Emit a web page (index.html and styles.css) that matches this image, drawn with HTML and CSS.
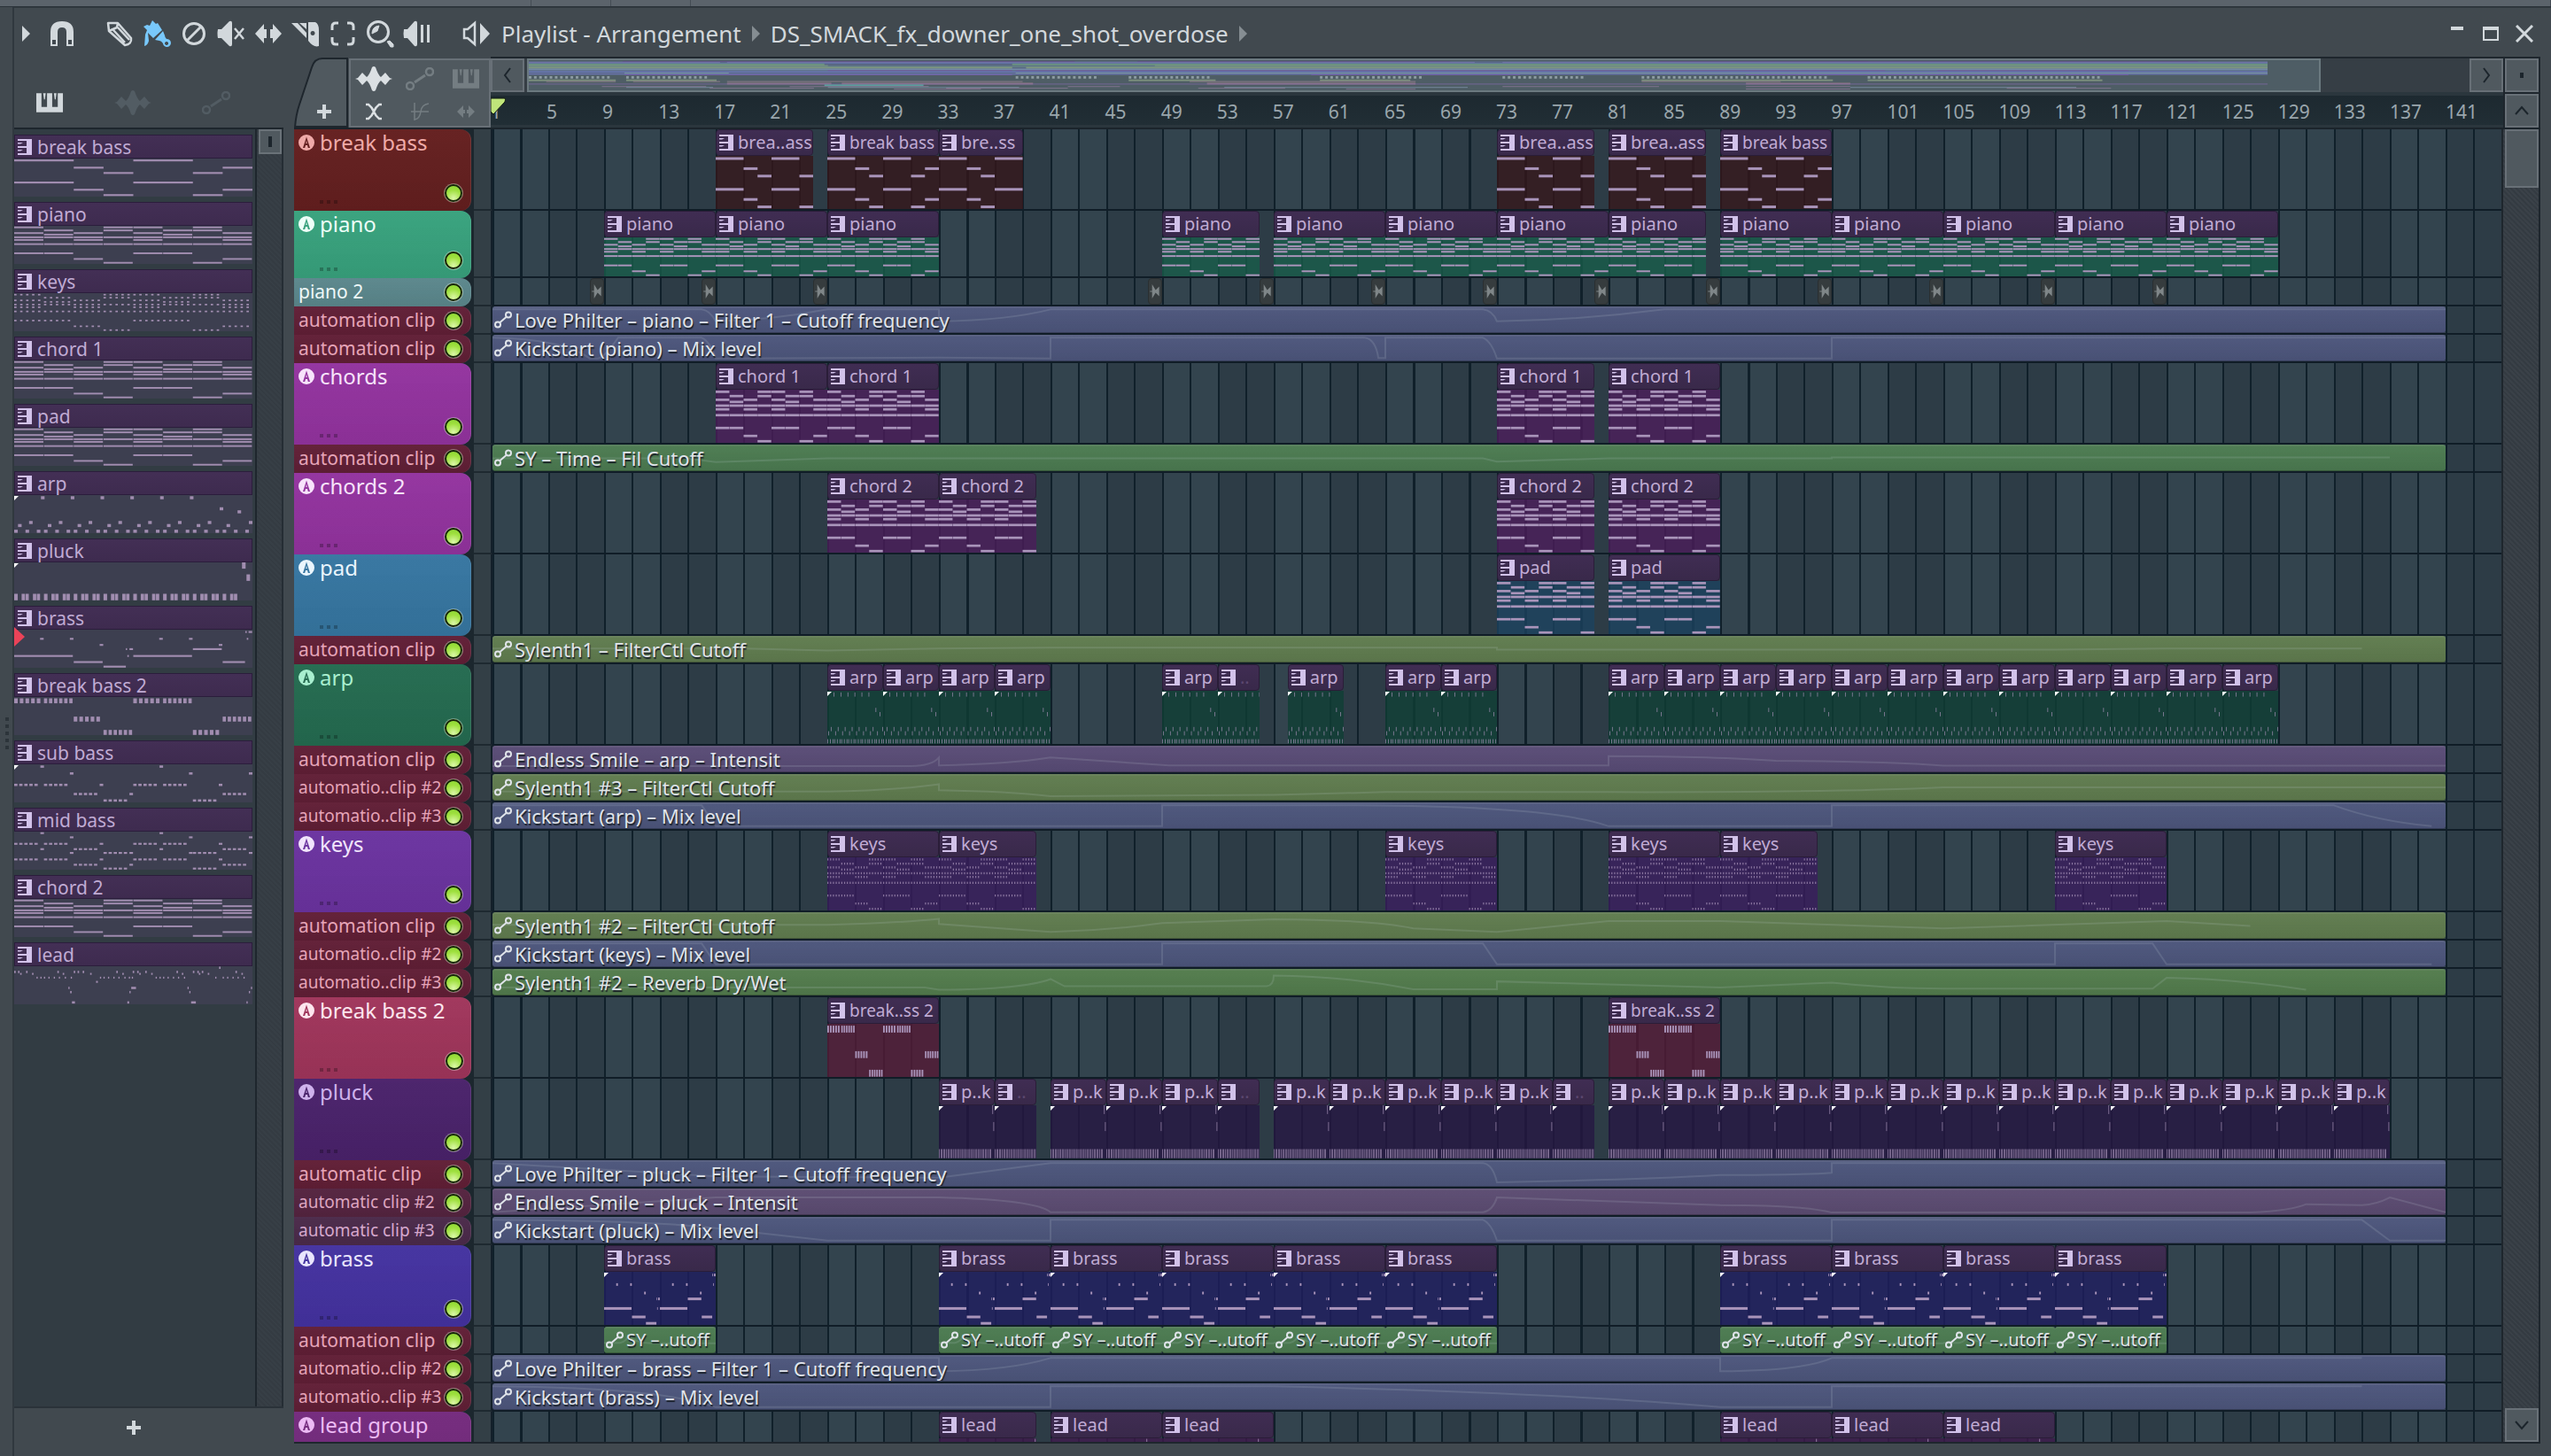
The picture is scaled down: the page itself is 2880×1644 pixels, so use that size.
FILE: index.html
```html
<!DOCTYPE html>
<html lang="en">
<head>
    <meta charset="UTF-8">
    <meta name="viewport" content="width=device-width, initial-scale=1.0">
    <title>Playlist - Arrangement</title>
    <link rel="stylesheet" href="styles.css">
</head>
<body>
    <svg class="defs" aria-hidden="true">
        <symbol id="i-keys" viewBox="0 0 32 22"><path d="M0 0H6V16H12.500V0H18.500V16H25V0H31V22H0Z"/><path d="M8 0H11L10 7H9ZM20.500 0H23.500L22.500 7H21.500Z"/></symbol>
        <symbol id="i-wave" viewBox="0 0 42 28"><path d="M0 14L3 13L8 7L13 12Q16 10 19 1Q21-1 23 1Q26 10 29 12L34 7L39 13L42 14L39 15L34 21L29 16Q26 18 23 27Q21 29 19 27Q16 18 13 16L8 21L3 15Z"/></symbol>
        <symbol id="i-auto" viewBox="0 0 32 26"><g fill="none" stroke="currentColor" stroke-width="2.500"><circle cx="5" cy="21" r="4"/><circle cx="27" cy="5" r="4"/><path d="M10 17L22 9" stroke-width="3"/></g></symbol>
        <symbol id="i-pattern" viewBox="0 0 16 18"><path d="M0 0H16V18H0V16H10V10H0V8H10V2H0Z"/><path d="M0 4H6L3 5.500H0ZM0 12H6L3 13.500H0Z"/></symbol>
        <symbol id="i-link" viewBox="0 0 20 20"><g fill="none" stroke="currentColor" stroke-width="2"><circle cx="4" cy="15.500" r="3"/><circle cx="16" cy="4.500" r="3"/><path d="M6.500 13L13.500 7"/></g></symbol>
        <symbol id="i-inst" viewBox="0 0 18 18"><path fill-rule="evenodd" d="M9 0A9 9 0 1 1 9 18A9 9 0 1 1 9 0ZM9 2.500L5 15H7.200L8 12H10L10.800 15H13ZM9 6.500L9.700 10H8.300Z"/></symbol>
        <symbol id="i-audio" viewBox="0 0 14 20"><path d="M0 9.500H3V0L8 8L13 3V17L8 12L3 20V10.500H0Z"/></symbol>
    </svg>

    <div class="topstrip"><span></span><span></span><span></span><span></span></div>

    <main class="window">
        <header class="titlebar">
            <button class="caret" aria-label="Menu"><svg viewBox="0 0 9 18"><path d="M0 0L9 9L0 18Z"/></svg></button>
            <button class="tool snap" aria-label="Snap"><svg viewBox="0 0 32 32"><path fill-rule="evenodd" d="M3 30V14Q3 2 16 2T29 14V30H21V14Q21 9 16 9T11 14V30ZM5 23V28H9V23ZM23 23V28H27V23Z"/></svg></button>
            <nav class="tools">
                <button class="tool" aria-label="Draw"><svg viewBox="0 0 32 32"><g fill="none" stroke="currentColor" stroke-width="2.500" stroke-linejoin="round"><path d="M3 4L14 4L29 21Q30 28 22 29L4 13ZM14 4L13 9L4 13M9 12L22 26M14 9L27 23"/></g></svg></button>
                <button class="tool on" aria-label="Paint"><svg viewBox="0 0 32 32"><path fill-rule="evenodd" d="M1 8L5 6L8 7L11 1L15 5L17 4L22 12L12 21L6 15L7 24Q6 29 2 30L3 17L5 12Z"/><path fill-rule="evenodd" d="M23 13L25 18Q25 20 27 22A4.500 4.500 0 1 1 23 27Q21 24 19 24L14 23ZM27 25A2 2 0 1 0 27.100 25Z"/></svg></button>
                <button class="tool" aria-label="Delete"><svg viewBox="0 0 32 32"><g fill="none" stroke="currentColor" stroke-width="3"><circle cx="16" cy="16" r="11.500"/><path d="M8 24L24 8"/></g></svg></button>
                <button class="tool" aria-label="Mute"><svg viewBox="0 0 32 32"><path d="M1 11H5L14 2Q17 1 17 4V28Q17 31 14 30L5 21H1Q0 16 1 11Z"/><path d="M20 10L30 22M30 10L20 22" stroke="currentColor" stroke-width="2.500"/></svg></button>
                <button class="tool" aria-label="Slip"><svg viewBox="0 0 32 32"><path d="M1 16L11 5V11H14V21H11V27ZM31 16L21 5V11H18V21H21V27Z"/></svg></button>
                <button class="tool" aria-label="Slice"><svg viewBox="0 0 32 32"><path fill-rule="evenodd" d="M0 4H7L17 15V21ZM9 4L17 11V4ZM19 3H27Q31 5 31 12V30Q25 32 19 24ZM24 13A2.500 2.500 0 1 0 24.100 13Z"/></svg></button>
                <button class="tool" aria-label="Select"><svg viewBox="0 0 32 32"><path d="M4 12V8Q4 4 8 4H11M21 4H24Q28 4 28 8V12M28 20V24Q28 28 24 28H21M11 28H8Q4 28 4 24V20" fill="none" stroke="currentColor" stroke-width="3"/></svg></button>
                <button class="tool" aria-label="Zoom"><svg viewBox="0 0 32 32"><circle cx="14" cy="14" r="11.500" fill="none" stroke="currentColor" stroke-width="3"/><path d="M7 16Q7 8 15 7L13 13ZM24 25L27 24L31 28V31L28 31Z" stroke="currentColor" stroke-width="1"/></svg></button>
                <button class="tool" aria-label="Playback"><svg viewBox="0 0 32 32"><path d="M1 11H5L13 2Q16 1 16 4V28Q16 31 13 30L5 21H1Q0 16 1 11ZM20 6H23V26H20ZM27 6H30V26H27Z"/></svg></button>
            </nav>
            <button class="tool out" aria-label="Preview"><svg viewBox="0 0 32 32"><path d="M14 4V28L6 21H2V11H6Z" fill="none" stroke="currentColor" stroke-width="2.500"/><path d="M20 4L31 16L20 28Z"/></svg></button>
            <h1 class="title">Playlist - Arrangement</h1>
            <svg class="crumb" viewBox="0 0 9 18"><path d="M0 0L9 9L0 18Z"/></svg>
            <span class="title">DS_SMACK_fx_downer_one_shot_overdose</span>
            <svg class="crumb" viewBox="0 0 9 18"><path d="M0 0L9 9L0 18Z"/></svg>
            <div class="win-buttons">
                <button aria-label="Minimize"><svg viewBox="0 0 20 20"><path d="M3 2H17V6H3Z"/></svg></button>
                <button aria-label="Maximize"><svg viewBox="0 0 20 20"><path fill-rule="evenodd" d="M1 2H19V18H1ZM3 6V16H17V6Z"/></svg></button>
                <button aria-label="Close"><svg viewBox="0 0 20 20"><path d="M1 1L19 19M19 1L1 19" stroke="currentColor" stroke-width="3"/></svg></button>
            </div>
        </header>

        <div class="workspace">
            <aside class="picker">
                <div class="picker-tabs">
                    <button class="active" aria-label="Patterns"><svg class="ic-keys"><use href="#i-keys"/></svg></button>
                    <button aria-label="Audio clips"><svg class="ic-wave"><use href="#i-wave"/></svg></button>
                    <button aria-label="Automation clips"><svg class="ic-auto"><use href="#i-auto"/></svg></button>
                </div>
                <div class="picker-body">
                    <div class="picker-list" id="picker"></div>
                    <div class="picker-scroll"><button class="thumb" aria-label="Scroll patterns"></button></div>
                </div>
                <button class="picker-add" aria-label="Add pattern"><svg viewBox="0 0 16 16"><path d="M6 0H10V6H16V10H10V16H6V10H0V6H6Z"/></svg></button>
            </aside>

            <section class="playlist">
                <div class="head">
                    <div class="corner">
                        <button class="add-tab" aria-label="Add track">
                            <svg class="tab-shape" viewBox="0 0 62 80" preserveAspectRatio="none"><path d="M1 80Q2 66 6 54L20 12Q23 2 32 2H60V79H2Z"/></svg>
                            <svg class="plus" viewBox="0 0 16 16"><path d="M6 0H10V6H16V10H10V16H6V10H0V6H6Z"/></svg>
                        </button>
                        <div class="modes">
                            <button class="active" aria-label="Audio"><svg class="ic-wave"><use href="#i-wave"/></svg></button>
                            <button aria-label="Automation"><svg class="ic-auto"><use href="#i-auto"/></svg></button>
                            <button aria-label="Pattern"><svg class="ic-keys"><use href="#i-keys"/></svg></button>
                            <button class="active" aria-label="Crossfade"><svg class="ic-sq" viewBox="0 0 20 20"><path d="M1 2H4Q8 5 10 10T16 18H19M19 2H16Q12 5 10 10T4 18H1" fill="none" stroke="currentColor" stroke-width="2.500"/></svg></button>
                            <button aria-label="Curve"><svg class="ic-sq" viewBox="0 0 20 20"><path d="M0 10H20M4 0V20M4 19Q10 18 11 10T20 1" fill="none" stroke="currentColor" stroke-width="1.500"/></svg></button>
                            <button aria-label="Stretch"><svg class="ic-sq" viewBox="0 0 20 20"><path d="M0 10L7 3V8H9V12H7V17ZM20 10L13 3V8H11V12H13V17Z"/></svg></button>
                        </div>
                    </div>
                    <div class="timeline">
                        <div class="minimap">
                            <button aria-label="Scroll left"><svg viewBox="0 0 20 20"><path d="M13 2L7 10L13 18"/></svg></button>
                            <div class="map-track"><div class="map-thumb"><svg id="map" viewBox="0 0 1000 36" preserveAspectRatio="none"></svg></div></div>
                            <button aria-label="Scroll right"><svg viewBox="0 0 20 20"><path d="M7 2L13 10L7 18"/></svg></button>
                        </div>
                        <div class="ruler" id="ruler">
                            <svg class="playhead" viewBox="0 0 18 20"><path d="M0 1H16Q17 2 16 5L3 19L0 16Z"/></svg>
                        </div>
                    </div>
                    <div class="v-head">
                        <button aria-label="Focus"><i></i></button>
                        <button aria-label="Scroll up"><svg viewBox="0 0 20 20"><path d="M3 14L10 6L17 14"/></svg></button>
                    </div>
                </div>
                <div class="body">
                    <div class="tracks" id="tracks"></div>
                    <div class="v-scroll">
                        <button class="v-thumb" aria-label="Scroll tracks"></button>
                        <button class="v-down" aria-label="Scroll down"><svg viewBox="0 0 20 20"><path d="M3 6L10 14L17 6"/></svg></button>
                    </div>
                </div>
            </section>
        </div>
    </main>
    <script src="script.js"></script>
</body>
</html>
```
FILE: styles.css
```css
* {
    box-sizing: border-box;
}

body {
    margin: 0;
    height: 100vh;
    display: flex;
    flex-direction: column;
    overflow: hidden;
    background-color: #41494f;
    font-family: "Noto Sans", "Open Sans", sans-serif;
    color: #d2d8dc;
}

button {
    margin: 0;
    padding: 0;
    border: 0;
    background: none;
    color: inherit;
    font: inherit;
    cursor: pointer;
}

svg {
    display: block;
    fill: currentColor;
}

.defs {
    position: absolute;
    width: 0;
    height: 0;
}

.topstrip {
    flex: none;
    display: grid;
    grid-template-columns: 20fr 3fr 3fr 70fr;
    height: 8px;
    background-color: #5b636b;
    border-bottom: 1px solid #2a3239;
}

.topstrip span {
    border-right: 1px solid #454d55;
}

.window {
    flex: 1;
    min-height: 0;
    display: flex;
    flex-direction: column;
    margin-left: 14px;
    padding: 0 12px 14px 0;
    border-left: 2px solid #30383f;
    border-top: 1px solid #31393f;
    position: relative;
}

/* grip on the left edge */
.window::before {
    content: "";
    position: absolute;
    left: -10px;
    top: 49%;
    width: 4px;
    height: 36px;
    background: repeating-linear-gradient(#2c343a 0 4px, transparent 4px 8px);
}

/* title bar */
.titlebar {
    flex: none;
    display: flex;
    align-items: center;
    height: 58px;
    margin-bottom: -3px;
    padding: 0 8px 0 9px;
}

.caret svg,
.crumb {
    width: 9px;
    height: 18px;
}

.tool svg {
    width: 32px;
    height: 32px;
}

.snap {
    margin-left: 20px;
}

.tools {
    display: flex;
    margin: 0 30px 0 28px;
}

.tools .tool {
    width: 42px;
    display: flex;
    justify-content: center;
}

.tool.on {
    color: #78c8fb;
}

.title {
    margin: 0 0 0 12px;
    font-size: 26px;
    font-weight: 400;
    line-height: 32px;
}

.crumb {
    margin-left: 12px;
    color: #858d92;
}

.win-buttons {
    display: flex;
    gap: 18px;
    margin-left: auto;
}

.win-buttons svg {
    width: 20px;
    height: 20px;
}

.workspace {
    flex: 1;
    min-height: 0;
    display: flex;
    gap: 12px;
}

/* icons */
.ic-keys { width: 31px; height: 22px; }
.ic-wave { width: 42px; height: 28px; }
.ic-auto { width: 32px; height: 26px; }
.ic-sq { width: 20px; height: 20px; }

/* picker panel */
.picker {
    flex: none;
    width: 304px;
    display: flex;
    flex-direction: column;
}

.picker-tabs {
    display: flex;
    align-items: center;
    gap: 57px;
    height: 80px;
    padding: 24px 0 0 25px;
    color: #525c63;
}

.picker-tabs .active {
    color: #d2d8dc;
}

.picker-body {
    flex: 1;
    min-height: 0;
    display: flex;
    border-top: 2px solid #1e262d;
    border-bottom: 2px solid #2a3239;
    background-color: #323c43;
}

.picker-list {
    flex: 1;
    padding: 6px 3px 0 0;
    border-right: 2px solid #1e262d;
    overflow: hidden;
}

.pattern {
    position: relative;
    display: block;
    width: 100%;
    height: 70px;
    margin-bottom: 6px;
    text-align: left;
    background-color: #3d3f50;
}

.pattern.current::after {
    content: "";
    position: absolute;
    left: 0;
    top: 24px;
    width: 12px;
    height: 22px;
    background-color: #ea4358;
    clip-path: polygon(0 0, 100% 50%, 0 100%);
}

.pattern-name {
    display: flex;
    align-items: center;
    gap: 6px;
    height: 27px;
    padding-left: 3px;
    font-size: 21px;
    line-height: 22px;
    color: #c0abd4;
    background-image: linear-gradient(#432f55, #3e2b4f);
    border: 1px solid #2b1d3c;
}

.pattern-name svg {
    width: 16px;
    height: 18px;
    color: #d2c2ea;
}

.strip {
    position: relative;
    display: block;
}

.notes {
    width: 100%;
    height: 43px;
    color: #a18db0;
}

.picker-scroll {
    width: 30px;
    padding-left: 2px;
    background: repeating-linear-gradient(45deg, #373f46 0 2px, #343b42 2px 4px);
    border-right: 2px solid #252d34;
}

.thumb {
    display: block;
    width: 26px;
    height: 28px;
    border: 2px solid #6a7278;
    background: linear-gradient(#1c252c, #1c252c) center / 4px 12px no-repeat #50595f;
}

.picker-add {
    height: 40px;
    padding: 4px 34px 0 0;
    display: flex;
    align-items: center;
    justify-content: center;
}

.picker-add svg,
.plus {
    width: 16px;
    height: 16px;
}

/* playlist head */
.playlist {
    flex: 1;
    min-width: 0;
    display: flex;
    flex-direction: column;
}

.head {
    flex: none;
    display: flex;
    height: 82px;
    border-bottom: 2px solid #1b242b;
}

.corner {
    flex: none;
    display: flex;
    width: 222px;
}

.add-tab {
    position: relative;
    width: 62px;
    padding: 44px 0 0 26px;
}

.tab-shape {
    position: absolute;
    left: 0;
    top: 0;
    width: 62px;
    height: 80px;
    fill: #50595f;
    stroke: #1e262d;
    stroke-width: 2;
}

.plus {
    position: relative;
}

.modes {
    flex: 1;
    display: grid;
    grid-template-columns: 3fr 3fr 3fr;
    margin-top: 2px;
    border: 2px solid #687077;
    background-color: #50595f;
    color: #747d82;
}

.modes button {
    display: flex;
    align-items: center;
    justify-content: center;
}

.modes .active {
    color: #dbe0e3;
}

.timeline {
    flex: 1;
    min-width: 0;
}

.minimap {
    display: flex;
    height: 44px;
    border-top: 2px solid #1e262d;
    border-bottom: 4px solid #2b363d;
    background-color: #363e45;
}

.minimap button,
.v-head button,
.v-down {
    flex: none;
    display: flex;
    align-items: center;
    justify-content: center;
    width: 38px;
    height: 38px;
    border: 2px solid #687077;
    background-color: #50595f;
}

.minimap button svg,
.v-head svg,
.v-down svg {
    width: 20px;
    height: 20px;
    fill: none;
    stroke: #1c252c;
    stroke-width: 2;
}

.map-track {
    flex: 1;
    padding: 0 168px 0 3px;
}

.map-thumb {
    height: 38px;
    padding-right: 58px;
    border: 2px solid #6b797f;
    background-color: #4e5d65;
}

.map-thumb svg {
    width: 100%;
    height: 34px;
}

.ruler {
    position: relative;
    display: grid;
    grid-template-columns: repeat(36, 1fr);
    height: 36px;
    padding: 0 2px 0 0;
    background-image: linear-gradient(#1d2930, #212e35);
    border-bottom: 3px solid #2b363d;
    color: #9aa6ac;
    font-size: 21px;
    line-height: 36px;
}

.playhead {
    position: absolute;
    left: 0;
    top: 2px;
    width: 18px;
    height: 20px;
    fill: #c0e57a;
    stroke: #101a10;
}

.v-head {
    display: flex;
    flex-direction: column;
    gap: 2px;
    width: 42px;
    padding: 2px 0 0 2px;
    border-right: 2px solid #1e262d;
    background-color: #1e262d;
}

.v-head i {
    width: 4px;
    height: 6px;
    background-color: #1c252c;
}

/* tracks */
.body {
    flex: 1;
    min-height: 0;
    display: flex;
    border-bottom: 2px solid #1e262d;
}

.tracks {
    flex: 1;
    min-width: 0;
    overflow: hidden;
    background-color: #1c272e;
}

.track {
    --tint: #611f36;
    --ink: #e6a4b8;
    --body: #361a1f;
    display: grid;
    grid-template-columns: 200px 24px 1fr;
    height: 32px;
}

.track.tall { height: 92px; }
.track.mid { height: 76px; }

.break-bass { --tint: #641f1f; --ink: #efaaa8; --body: #35161a; }
.piano { --tint: #38a27d; --ink: #edfff8; --body: #185c4a; }
.piano-2 { --tint: #5b878c; --ink: #eef8f8; }
.chords { --tint: #93339f; --ink: #f7e3fb; --body: #4b1d5a; }
.pad { --tint: #3676a1; --ink: #eaf5fd; --body: #1b425f; }
.arp { --tint: #246b50; --ink: #a8efcf; --body: #0f3e34; }
.keys { --tint: #6b33a0; --ink: #f1e4fc; --body: #3a1d5e; }
.break-bass-2 { --tint: #a0355b; --ink: #fde6ee; --body: #551c37; }
.pluck { --tint: #4a226b; --ink: #cfb2ec; --body: #261642; }
.brass { --tint: #4432a0; --ink: #e9e5fd; --body: #1f1e60; }
.lead { --tint: #742a7d; --ink: #ecbaf4; --body: #3f1a4c; }
.auto-b { --tint: #552440; --ink: #dda5c0; }
.auto-c { --tint: #4b2a4a; --ink: #d6a8cd; }

.track-head {
    position: relative;
    display: flex;
    align-items: center;
    justify-content: space-between;
    padding: 0 8px 0 5px;
    border-radius: 0 12px 12px 0;
    background-color: var(--tint);
    background-image: linear-gradient(rgba(255, 255, 255, 0.02), rgba(0, 0, 0, 0.06));
    border-right: 1px solid rgba(255, 255, 255, 0.1);
    color: var(--ink);
    font-size: 21px;
    line-height: 30px;
    white-space: nowrap;
}

.track-name {
    display: flex;
    align-items: center;
    gap: 6px;
    padding-bottom: 2px;
}

.track-name svg {
    width: 18px;
    height: 18px;
}

.track-name.tight {
    font-size: 19px;
}

.tall .track-head,
.mid .track-head {
    align-items: flex-start;
    font-size: 24px;
}

.tall .led,
.mid .led {
    align-self: flex-end;
    margin-bottom: 9px;
}

.dots {
    position: absolute;
    left: 29px;
    bottom: 8px;
    width: 20px;
    height: 4px;
    background: repeating-linear-gradient(90deg, rgba(0, 0, 0, 0.25) 0 4px, transparent 4px 8px);
}

.led {
    appearance: none;
    flex: none;
    width: 22px;
    height: 22px;
    margin: 0;
    border: 1px solid rgba(255, 255, 255, 0.35);
    border-radius: 50%;
    background-color: #16230a;
    background-clip: padding-box;
}

.led:checked {
    background-image: radial-gradient(circle at 50% 80%, #dcf8a8, #9fe03f 50%, #7fd02a);
    box-shadow: inset 0 0 0 2px #16230a;
}

.gutter {
    margin-left: 3px;
    border-right: 2px solid #14202a;
    border-bottom: 2px solid #1e2930;
    background-color: #333f46;
}

.lane {
    position: relative;
    border-bottom: 2px solid #101d27;
    background-image:
        repeating-linear-gradient(90deg, #10202a 0 2px, transparent 2px calc(100% / 72)),
        repeating-linear-gradient(90deg, #33444e 0 calc(100% / 36), #2d3c46 calc(100% / 36) calc(100% / 18));
}

/* clips sit on the lane by bar number */
.clip {
    position: absolute;
    top: 0;
    bottom: 0;
    display: flex;
    flex-direction: column;
    overflow: hidden;
}

.clip-name {
    flex: none;
    display: flex;
    align-items: center;
    gap: 5px;
    height: 30px;
    padding-left: 3px;
    border: 1px solid #2a1d38;
    border-radius: 4px;
    background-image: linear-gradient(#402d53, #39294a);
    color: #c0abd4;
    font-size: 20px;
    line-height: 26px;
    white-space: nowrap;
}

.clip-name.tight {
    font-size: 19px;
}

.clip-name.faint {
    color: #5b4870;
}

.clip-name svg {
    flex: none;
    width: 16px;
    height: 18px;
    color: #d2c2ea;
}

.clip-notes {
    position: relative;
    flex: 1;
    min-height: 0;
}

.clip-notes::before {
    content: "";
    position: absolute;
    inset: 0;
    background-color: var(--body);
    opacity: 0.8;
}

.clip-notes svg {
    position: relative;
    width: 100%;
    height: 100%;
    color: #a994ba;
}

.arp .clip-notes svg,
.keys .clip-notes svg,
.pluck .clip-notes svg {
    opacity: 0.7;
}

.trimmed::after {
    content: "";
    position: absolute;
    left: 0;
    top: 1px;
    width: 5px;
    height: 5px;
    background-color: #fff;
    clip-path: polygon(0 0, 100% 0, 0 100%);
}

.clip.audio {
    border: 1px solid #2a2f31;
    border-radius: 4px;
    background-color: #363c3e;
    color: #7f8688;
    justify-content: center;
}

.clip.audio svg {
    width: 100%;
    height: 16px;
}

.clip.auto {
    --auto: #4d567c;
    justify-content: center;
    border-radius: 3px;
    border-top: 2px solid rgba(255, 255, 255, 0.1);
    border-bottom: 1px solid rgba(0, 0, 0, 0.3);
    background-color: var(--auto);
    background-image: linear-gradient(rgba(255, 255, 255, 0.02), rgba(0, 0, 0, 0.06));
    color: #e0e4ea;
}

.clip.green { --auto: #4c7b51; }
.clip.olive { --auto: #607c4f; }
.clip.moss { --auto: #537c4d; }
.clip.violet { --auto: #594c76; }
.clip.plum { --auto: #5c4c72; }

.curve {
    position: absolute;
    inset: 0;
    width: 100%;
    height: 100%;
    fill: none;
    stroke: rgba(200, 215, 220, 0.15);
    stroke-width: 2;
}

.auto-name {
    position: relative;
    display: flex;
    align-items: center;
    gap: 3px;
    padding: 0 0 2px 2px;
    font-size: 22px;
    line-height: 24px;
    text-shadow: 1px 2px 1px #1a2028;
    white-space: nowrap;
}

.auto-name.short {
    font-size: 20px;
}

.auto-name svg {
    flex: none;
    width: 20px;
    height: 20px;
}

/* vertical scrollbar */
.v-scroll {
    flex: none;
    display: flex;
    flex-direction: column;
    justify-content: space-between;
    width: 44px;
    padding-left: 2px;
    border-left: 2px solid #1e262d;
    border-right: 2px solid #1e262d;
    background: repeating-linear-gradient(45deg, #3a4148 0 2px, #343b42 2px 4px);
}

.v-thumb {
    height: 66px;
    border: 2px solid #687077;
    background-color: #50595f;
}
```
FILE: script.js
```js
const BARS = 144;
const END = 140;

// note patterns: 8 columns wide, rows as [y %, height %, [x, width] ...]
const cols = (list, w = 1) => list.map(c => [c, w]);
const dashes = (list, n, step, w) => list.flatMap(c => Array.from({ length: n }, (_, i) => [c + i * step, w]));
const every = [0, 1, 2, 3, 4, 5, 6, 7];

const chord = [
    [4, [0, 3, 4, 6]], [12, [1, 3, 5, 6]], [19, [0, 2, 4, 7]], [23, [1, 5]], [30, every],
    [37, [0, 2, 4, 7]], [48, every], [72, [0, 1, 4, 5]], [87, [2, 7]], [97, [3, 6]]
];

const patterns = {
    'break bass': [5, 63].flatMap(y => [
        [y, 5, [[0, 2], [4, 2]]],
        [y + 19, 5, [[2, 1], [7, 1]]],
        [y + 33, 5, [[3, 1], [6, 1]]]
    ]),
    chord: chord.map(([y, c]) => [y, 4.5, cols(c, 0.98)]),
    keys: chord.map(([y, c]) => [y, 4, dashes(c, 5, 0.2, 0.08)]),
    arp: [
        [7, 8, cols([0.9, 1.9, 2.9, 3.9, 4.9, 5.9], 0.12)],
        [36, 8, [[6.9, 0.12]]],
        [44, 8, [[7.5, 0.12]]],
        [72, 8, cols([0.5, 1.5, 2.5, 3.5, 4.5, 5.5, 6.5, 7.88], 0.12)],
        [80, 8, cols([0.13, 1.13, 2.13, 3.13, 4.13, 5.13, 6.13, 7.13], 0.12)],
        [95, 8, dashes(every, 3, 0.38, 0.12)]
    ],
    pluck: [
        [8, 17, [[7.65, 0.12]]],
        [40, 17, [[7.8, 0.12]]],
        [91, 17, every.flatMap(c => [[c, 0.12], [c + 0.25, 0.11], [c + 0.38, 0.11], [c + 0.63, 0.11], [c + 0.76, 0.11]]).slice(0, 38)]
    ],
    brass: [
        [6, 5, [[7.76, 0.05], [7.87, 0.12]]],
        [24, 5, [[0.87, 0.12], [1.87, 0.12], [4.87, 0.12], [5.87, 0.12], [7.81, 0.05]]],
        [40, 5, [[2.87, 0.12], [6.87, 0.12]]],
        [51, 5, [[3.75, 0.04], [3.87, 0.12], [6, 0.97]]],
        [69, 5, [[0, 1.97], [3.8, 0.05], [4, 1.97]]],
        [85, 5, [[2, 0.97], [7, 0.75]]],
        [97, 5, [[3, 0.75]]]
    ],
    'break bass 2': [
        [10, 13, [...dashes([0, 4], 5, 0.19, 0.12), ...dashes([1, 5], 6, 0.17, 0.11)]],
        [58, 13, [...dashes([2], 5, 0.19, 0.12), ...dashes([7], 6, 0.17, 0.11)]],
        [93, 13, [...dashes([3], 6, 0.17, 0.11), ...dashes([6], 5, 0.19, 0.12)]]
    ],
    'sub bass': [
        [6, 6, cols([0.88, 4.88], 0.12)],
        [24, 6, cols([1.87, 5.87, 7.88], 0.12)],
        [54, 6, [...dashes([0, 1, 4, 5], 5, 0.17, 0.11), [2.87, 0.12], [6.87, 0.12]]],
        [78, 6, [...dashes([2, 7], 5, 0.17, 0.11), [3.87, 0.12]]],
        [95, 6, dashes([3, 6], 5, 0.17, 0.11)]
    ],
    'mid bass': [
        [4, 5, cols([0.88, 4.88], 0.12)],
        [15, 5, cols([1.87, 5.87, 7.88], 0.12)],
        [32, 5, [...dashes([0, 1, 4, 5], 5, 0.17, 0.11), [2.87, 0.12], [6.87, 0.12]]],
        [46, 5, [...dashes([2, 7], 5, 0.17, 0.11), [0.88, 0.12], [4.88, 0.12]]],
        [56, 5, [...dashes([3, 6], 5, 0.17, 0.11), [1.87, 0.12], [5.87, 0.12], [7.88, 0.12], [3.87, 0.12]]],
        [73, 5, [...dashes([0, 1, 4, 5], 5, 0.17, 0.11), [2.87, 0.12], [6.87, 0.12]]],
        [87, 5, [...dashes([2, 7], 5, 0.17, 0.11), [3.87, 0.12]]],
        [97, 5, dashes([3, 6], 5, 0.17, 0.11)]
    ],
    lead: [
        [4, 6, [[6.88, 0.05]]],
        [15, 6, [0, 0.13, 0.4, 1.45, 2, 2.13, 2.3, 3.43, 3.98, 4.13, 4.4, 5.45, 6, 6.15, 6.3, 7.43].map(x => [x, 0.05])],
        [20, 5, [0.2, 0.6, 1.63, 2.55, 3.63, 4.2, 4.6, 5.63, 6.2, 6.5, 7.63].map(x => [x, 0.05])],
        [30, 5, [0.75, 0.88, 1, 1.15, 1.33, 1.5, 1.7, 1.9, 2.88, 3, 3.15, 3.33, 3.5, 3.7, 3.85, 3.95, 4.75, 4.88, 5, 5.15, 5.33, 5.5, 5.7, 6.75, 7, 7.15, 7.33, 7.5, 7.7].map(x => [x, 0.04])],
        [41, 5, [[2.75, 0.06]]],
        [57, 6, [[1.82, 0.04], [3.93, 0.16], [5.82, 0.04], [7.95, 0.04]]],
        [68, 6, [[1.88, 0.05], [3.87, 0.04], [5.88, 0.04], [7.88, 0.04]]],
        [95, 6, [[1.94, 0.1], [3.8, 0.06], [5.94, 0.16], [7.8, 0.04]]]
    ]
};
patterns.piano = patterns['chord 1'] = patterns['chord 2'] = patterns.pad = patterns.chord;

function notes(name, width, cls) {
    const rects = patterns[name].flatMap(([y, h, list]) =>
        list.map(([x, w]) => `<rect x="${x}" y="${y - h / 2}" width="${w}" height="${h}"/>`)).join('');
    return `<svg class="${cls || ''}" viewBox="0 0 ${width} 100" preserveAspectRatio="none">${rects}</svg>`;
}

const use = id => `<svg><use href="#${id}"/></svg>`;

// picker
const trimmedPatterns = ['arp', 'pluck', 'sub bass'];
document.getElementById('picker').innerHTML = ['break bass', 'piano', 'keys', 'chord 1', 'pad', 'arp', 'pluck', 'brass',
    'break bass 2', 'sub bass', 'mid bass', 'chord 2', 'lead'].map(name =>
    `<button class="pattern${name === 'brass' ? ' current' : ''}">
        <span class="pattern-name">${use('i-pattern')}${name}</span>
        <span class="strip${trimmedPatterns.includes(name) ? ' trimmed' : ''}">${notes(name, 8, 'notes')}</span>
    </button>`).join('');

// ruler
document.getElementById('ruler').insertAdjacentHTML('beforeend',
    Array.from({ length: 36 }, (_, i) => `<span>${i * 4 + 1}</span>`).join(''));

// clips: [start bar, length, label]
const run = (from, to, step, label) => {
    const out = [];
    for (let b = from; b < to; b += step) out.push([b, step, label]);
    return out;
};
const brassBars = [9, 33, 41, 49, 57, 65, 89, 97, 105, 113];

const tracks = [
    { name: 'break bass', cls: 'break-bass', size: 'tall', pattern: 'break bass', clips: [[17, 7, 'brea..ass'], [25, 8, 'break bass'], [33, 6, 'bre..ss'], [73, 7, 'brea..ass'], [81, 7, 'brea..ass'], [89, 8, 'break bass']] },
    { name: 'piano', cls: 'piano', size: 'mid', pattern: 'piano', clips: [...run(9, 33, 8, 'piano'), [49, 7, 'piano'], [57, 8, 'piano'], [65, 8, 'piano'], [73, 8, 'piano'], [81, 7, 'piano'], ...run(89, 129, 8, 'piano')] },
    { name: 'piano 2', cls: 'piano-2', audio: [8, 16, 24, 48, 56, 64, 72, 80, 88, 96, 104, 112, 120] },
    { name: 'automation clip', auto: 'Love Philter – piano – Filter 1 – Cutoff frequency', curve: 'M0 5H15Q15.6 10 16 55Q20 50 24 5H32V55Q37 50 40 5H71Q71.7 10 72 55Q78 50 84 5H96V5H140' },
    { name: 'automation clip', auto: 'Kickstart (piano) – Mix level', curve: 'M0 5Q5 10 7 92H7.5Q8 90 9 5H15Q15.6 20 16 92L32 88L40 92V5H62.5Q63.3 10 63.500 90H64V5H71Q71.6 20 72 92H96V5H140' },
    { name: 'chords', cls: 'chords', size: 'tall', pattern: 'chord 1', clips: [[17, 8, 'chord 1'], [25, 8, 'chord 1'], [73, 7, 'chord 1'], [81, 8, 'chord 1']] },
    { name: 'automation clip', auto: 'SY – Time – Fil Cutoff', color: 'green', curve: 'M0 50H14L16 66L24 50H71L72 64L80 50H96V46H136' },
    { name: 'chords 2', cls: 'chords', size: 'tall', pattern: 'chord 2', clips: [[25, 8, 'chord 2'], [33, 7, 'chord 2'], [73, 7, 'chord 2'], [81, 8, 'chord 2']] },
    { name: 'pad', cls: 'pad', size: 'tall', pattern: 'pad', clips: [[73, 7, 'pad'], [81, 8, 'pad']] },
    { name: 'automation clip', auto: 'Sylenth1 – FilterCtl Cutoff', color: 'olive', curve: 'M0 45H18L24 54L32 45L40 42H72V50H112L120 45H134' },
    { name: 'arp', cls: 'arp', size: 'tall', pattern: 'arp', trimmed: true, scale: 2, clips: [...run(25, 41, 4, 'arp'), [49, 4, 'arp'], [53, 3, '..'], [58, 4, 'arp'], ...run(65, 73, 4, 'arp'), ...run(81, 129, 4, 'arp')] },
    { name: 'automation clip', auto: 'Endless Smile – arp – Intensit', color: 'violet', curve: 'M0 78H30Q31.500 76 32 42V75Q37 70 40 42L48.500 75H80V36Q88 38 92 56Q100 58 104 76H140' },
    { name: 'automatio..clip #2', auto: 'Sylenth1 #3 – FilterCtl Cutoff', color: 'olive', curve: 'M0 66H24Q29 60 32 35V60Q37 65 40 85L56 80L64 68H80Q96 70 104 48H140' },
    { name: 'automatio..clip #3', auto: 'Kickstart (arp) – Mix level', curve: 'M0 5H15L16 92H48V5H62Q76 8 80 92H96V5H104V5H132Q135 70 139 92' },
    { name: 'keys', cls: 'keys', size: 'tall', pattern: 'keys', clips: [[25, 8, 'keys'], [33, 7, 'keys'], [65, 8, 'keys'], [81, 8, 'keys'], [89, 7, 'keys'], [113, 8, 'keys']] },
    { name: 'automation clip', auto: 'Sylenth1 #2 – FilterCtl Cutoff', color: 'olive', curve: 'M0 45H24Q29 38 32 20V42L40 75Q44 70 48 38L56 22Q63 24 66 60L72 75L80 30H88L104 60L120 30L126 50' },
    { name: 'automatio..clip #2', auto: 'Kickstart (keys) – Mix level', curve: 'M0 5H15L16 92H48V5H71L72 92H80V92H96L112 92V5H119L120 92H139' },
    { name: 'automatio..clip #3', auto: 'Sylenth1 #2 – Reverb Dry/Wet', color: 'moss', curve: 'M0 70H31L32 80Q38 78 40 35L41 65H55.500Q56 60 56 20Q61 22 66 78H72V45L88 70L96 50Q100 75 104 75H119L120 30Q125 35 130 80' },
    { name: 'break bass 2', cls: 'break-bass-2', size: 'tall', pattern: 'break bass 2', clips: [[25, 8, 'break..ss 2'], [81, 8, 'break..ss 2']] },
    { name: 'pluck', cls: 'pluck', size: 'tall', pattern: 'pluck', trimmed: true, scale: 2, clips: [[33, 4, 'p..k'], [37, 3, '..'], [41, 4, 'p..k'], [45, 4, 'p..k'], [49, 4, 'p..k'], [53, 3, '..'], ...run(57, 77, 4, 'p..k'), [77, 3, '..'], ...run(81, 137, 4, 'p..k')] },
    { name: 'automatic clip', auto: 'Love Philter – pluck – Filter 1 – Cutoff frequency', curve: 'M0 5L16 60L32 66L40 5H71Q71.7 10 72 85Q82 75 88 55Q94 54 96 45V5H140' },
    { name: 'automatic clip #2', cls: 'auto-b', auto: 'Endless Smile – pluck – Intensit', color: 'plum', curve: 'M0 92Q8 60 16 30H32Q39 40 40 92H71Q71.7 85 72 30L88 62Q94 62 96 93H126Q129 85 130 58L134 62Q135 60 136 30L140 92' },
    { name: 'automatic clip #3', cls: 'auto-c', auto: 'Kickstart (pluck) – Mix level', curve: 'M0 5Q12 10 16 40L24 92H40V5H71Q71.6 20 72 92H96V5H134L136 92H140' },
    { name: 'brass', cls: 'brass', size: 'tall', pattern: 'brass', trimmed: true, clips: brassBars.map(b => [b, 8, 'brass']) },
    { name: 'automation clip', shortAuto: brassBars, auto: 'SY –..utoff', color: 'green', curve: 'M0 60H20Q28 55 30 30Q40 62 60 62H140' },
    { name: 'automatio..clip #2', auto: 'Love Philter – brass – Filter 1 – Cutoff frequency', curve: 'M0 5H32V60Q37 58 40 5H88V60Q94 58 96 5H134' },
    { name: 'automatio..clip #3', auto: 'Kickstart (brass) – Mix level', curve: 'M0 5Q12 10 16 92H40V5H56Q76 30 88 92H96V5H134' },
    { name: 'lead group', cls: 'lead', size: 'tall', pattern: 'lead', clips: [[33, 7, 'lead'], [41, 8, 'lead'], [49, 8, 'lead'], [89, 8, 'lead'], [97, 8, 'lead'], [105, 8, 'lead']] }
];

const place = (start, len) => `left:${(start - 1) / BARS * 100}%;width:${len / BARS * 100}%`;

function autoClip(t, start, len) {
    return `<div class="clip auto ${t.color || ''}" style="${place(start, len)}">
        <svg class="curve" viewBox="0 0 ${END} 100" preserveAspectRatio="none"><path vector-effect="non-scaling-stroke" d="${t.curve}"/></svg>
        <span class="auto-name${t.shortAuto ? ' short' : ''}">${use('i-link')}${t.auto}</span>
    </div>`;
}

function clipName(label) {
    const cls = label.length > 9 ? ' tight' : label === '..' ? ' faint' : '';
    return `<span class="clip-name${cls}">${use('i-pattern')}${label}</span>`;
}

function lane(t) {
    if (t.audio) {
        return t.audio.map(b => `<div class="clip audio" style="${place(b, 1)}">${use('i-audio')}</div>`).join('');
    }
    if (t.shortAuto) return t.shortAuto.map(b => autoClip(t, b, 8)).join('');
    if (t.auto) return autoClip(t, 1, END);
    return t.clips.map(([start, len, label]) => `<div class="clip" style="${place(start, len)}">
        ${clipName(label)}
        <span class="clip-notes${t.trimmed ? ' trimmed' : ''}">${notes(t.pattern, len * (t.scale || 1))}</span>
    </div>`).join('');
}

document.getElementById('tracks').innerHTML = tracks.map((t, i) => `<div class="track ${t.size || ''} ${t.cls || ''}">
    <div class="track-head">
        <label class="track-name${t.name.includes('#') ? ' tight' : ''}" for="mute-${i}">${t.size ? use('i-inst') : ''}${t.name}</label>
        ${t.size ? '<i class="dots"></i>' : ''}
        <input class="led" type="checkbox" id="mute-${i}" checked>
    </div>
    <div class="gutter"></div>
    <div class="lane">${lane(t)}</div>
</div>`).join('');

// minimap stripes: [y, height, colour, [x, width] ...] over 1000 units
const stripes = [
    [1, 17, '#5c6a88', [0, 1000]],
    [1, 1, '#64508c', [54, 260], [350, 180], [650, 120], [760, 200]],
    [2, 1, '#7c78b0', [0, 110], [114, 430], [560, 440]],
    [3, 1, '#6474b4', [0, 1000]],
    [4, 2, '#6f9c80', [0, 170], [278, 722]],
    [6, 1, '#8fae80', [0, 172], [360, 640]],
    [7, 1, '#709a8c', [0, 1000]],
    [8, 2, '#86a080', [0, 278], [286, 714]],
    [10, 2, '#7890ac', [0, 1000]],
    [12, 1, '#75549c', [172, 106], [280, 500], [810, 110]],
    [13, 2, '#6a78b4', [0, 1000]],
    [15, 1, '#7fa4a0', [55, 60], [280, 720]],
    [16, 1, '#6c74b4', [0, 1000]],
    [17, 1, '#7860a8', [55, 223], [450, 120], [700, 220]],
    [23, 2, '#869a82', [0, 50], [56, 52], [345, 50], [455, 52], [640, 110], [770, 135]],
    [25, 1, '#9a8290', [10, 40], [60, 50], [114, 170], [380, 130], [640, 80]],
    [27, 2, '#a07f8e', [114, 60], [180, 110], [390, 120], [700, 60]],
    [28, 1, '#7d68a2', [0, 1000]],
    [29, 2, '#5eaaa8', [170, 57]],
    [31, 1, '#8c7896', [42, 60], [150, 80], [310, 30], [560, 90], [700, 60]],
    [32, 1, '#7c92a6', [56, 50], [172, 110], [400, 140], [760, 130]],
    [33, 1, '#8c7896', [104, 60], [240, 70], [385, 50], [850, 60]],
    [34, 1, '#8c7896', [210, 50], [470, 40], [700, 60]]
];
const teeth = [[0, 48], [56, 50], [280, 50], [345, 50], [455, 60], [560, 50], [640, 110], [770, 135]].flatMap(([x, w]) =>
    Array.from({ length: w / 3 | 0 }, (_, i) => `<rect x="${x + i * 3}" y="19" width="1.500" height="3" fill="#8d9ca2"/>`));
document.getElementById('map').innerHTML = stripes.map(([y, h, fill, ...list]) =>
    list.map(([x, w]) => `<rect x="${x}" y="${y}" width="${w}" height="${h}" fill="${fill}" opacity="0.85"/>`).join('')).join('') + teeth.join('');
```
